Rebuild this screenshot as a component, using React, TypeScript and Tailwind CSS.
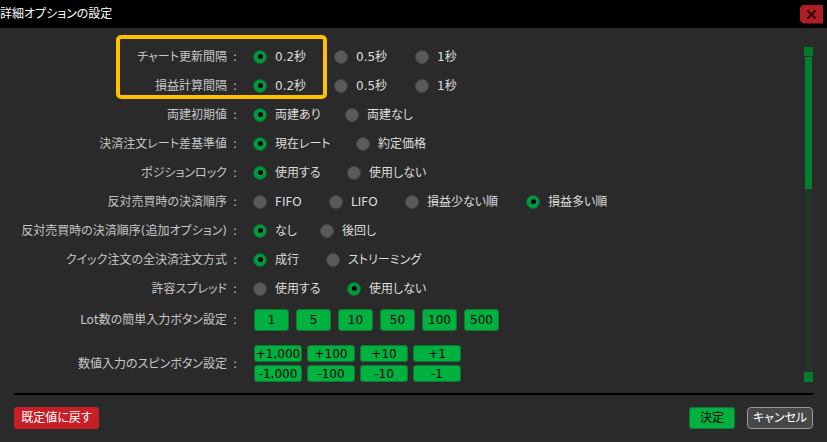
import React from "react"

type Opt = { label: string; w?: string }
type Row = { label: string; selected: number; options: Opt[] }

const rows: Row[] = [
  { label: "チャート更新間隔", selected: 0, options: [{ label: "0.2秒", w: "w-[81px]" }, { label: "0.5秒", w: "w-[81px]" }, { label: "1秒" }] },
  { label: "損益計算間隔", selected: 0, options: [{ label: "0.2秒", w: "w-[81px]" }, { label: "0.5秒", w: "w-[81px]" }, { label: "1秒" }] },
  { label: "両建初期値", selected: 0, options: [{ label: "両建あり", w: "w-[92px]" }, { label: "両建なし" }] },
  { label: "決済注文レート差基準値", selected: 0, options: [{ label: "現在レート", w: "w-[103px]" }, { label: "約定価格" }] },
  { label: "ポジションロック", selected: 0, options: [{ label: "使用する", w: "w-[94px]" }, { label: "使用しない" }] },
  {
    label: "反対売買時の決済順序",
    selected: 3,
    options: [{ label: "FIFO", w: "w-[76px]" }, { label: "LIFO", w: "w-[76px]" }, { label: "損益少ない順", w: "w-[121px]" }, { label: "損益多い順" }],
  },
  { label: "反対売買時の決済順序(追加オプション)", selected: 0, options: [{ label: "なし", w: "w-[67px]" }, { label: "後回し" }] },
  { label: "クイック注文の全決済注文方式", selected: 0, options: [{ label: "成行", w: "w-[73px]" }, { label: "ストリーミング" }] },
  { label: "許容スプレッド", selected: 1, options: [{ label: "使用する", w: "w-[94px]" }, { label: "使用しない" }] },
]

const lots = ["1", "5", "10", "50", "100", "500"]
const spinsUp = ["+1,000", "+100", "+10", "+1"]
const spinsDown = ["-1,000", "-100", "-10", "-1"]

function Radio({ on }: { on: boolean }) {
  return on ? (
    <span className="flex h-[14px] w-[14px] shrink-0 items-center justify-center rounded-full border border-[#0a6a2c] bg-[#00993d]">
      <span className="h-[5px] w-[5px] rounded-full bg-black" />
    </span>
  ) : (
    <span className="h-[14px] w-[14px] shrink-0 rounded-full border border-[#444444] bg-[#5a5a5a]" />
  )
}

function Label({ text }: { text: string }) {
  return (
    <div className="w-[240px] shrink-0 pr-[3px] text-right text-[12px] text-[#c6c6c6]">
      {text}
      <span className="ml-[6px]">:</span>
    </div>
  )
}

function GreenBtn({ text, className }: { text: string; className: string }) {
  return (
    <div className={`flex items-center justify-center rounded-[3px] border border-[#0c7a33] bg-[#00b140] text-[12px] text-black ${className}`}>
      {text}
    </div>
  )
}

export default function App() {
  return (
    <div className="relative flex h-[442px] w-[827px] flex-col overflow-hidden bg-[#2a2a2a] font-['DejaVu_Sans','Noto_Sans_CJK_JP',sans-serif] [font-feature-settings:'palt']">
      {/* Title bar */}
      <div className="flex h-[28px] shrink-0 items-center justify-between bg-black pr-[4px]">
        <span className="text-[12px] text-white">詳細オプションの設定</span>
        <button className="flex h-[19px] w-[23px] items-center justify-center bg-[#b01d25] [clip-path:polygon(3px_0,100%_0,100%_100%,3px_100%,0_calc(100%-3px),0_3px)]">
          <svg width="11" height="11" viewBox="0 0 11 11" fill="none">
            <path d="M1.5 1.5 L9.5 9.5 M9.5 1.5 L1.5 9.5" stroke="#2a0808" strokeWidth="2" />
          </svg>
        </button>
      </div>

      {/* Body */}
      <div className="flex flex-1">
        <div className="flex flex-1 flex-col pt-[14px]">
          {rows.map((row, ri) => (
            <div key={ri} className="flex h-[29px] items-center">
              <Label text={row.label} />
              <div className="ml-[13px] flex items-center">
                {row.options.map((o, oi) => (
                  <div key={oi} className={`flex items-center gap-[8px] ${o.w ?? ""}`}>
                    <Radio on={row.selected === oi} />
                    <span className="whitespace-nowrap text-[12px] text-[#dedede]">{o.label}</span>
                  </div>
                ))}
              </div>
            </div>
          ))}

          {/* Lot buttons */}
          <div className="mt-[6px] flex h-[22px] items-center">
            <Label text="Lot数の簡単入力ボタン設定" />
            <div className="ml-[14px] flex gap-[7px]">
              {lots.map((l) => (
                <GreenBtn key={l} text={l} className="h-[22px] w-[35px]" />
              ))}
            </div>
          </div>

          {/* Spin buttons */}
          <div className="mt-[14px] flex items-center">
            <Label text="数値入力のスピンボタン設定" />
            <div className="ml-[14px] flex flex-col gap-[3px]">
              <div className="flex gap-[5px]">
                {spinsUp.map((s) => (
                  <GreenBtn key={s} text={s} className="h-[17px] w-[48px]" />
                ))}
              </div>
              <div className="flex gap-[5px]">
                {spinsDown.map((s) => (
                  <GreenBtn key={s} text={s} className="h-[17px] w-[48px]" />
                ))}
              </div>
            </div>
          </div>
        </div>

        {/* Scrollbar */}
        <div className="mr-[14px] mt-[19px] flex h-[335px] w-[9px] flex-col items-center">
          <div className="h-[9px] w-[9px] bg-[#007a2d]" />
          <div className="mt-[1px] h-[132px] w-[7px] bg-[#00802e]" />
          <div className="h-[183px] w-[7px] bg-[#233428]" />
          <div className="h-[10px] w-[9px] bg-[#007a2d]" />
        </div>
      </div>

      {/* Divider */}
      <div className="mx-[14px] mb-[12px] border-t-2 border-black" />

      {/* Footer */}
      <div className="mb-[13px] flex items-center px-[14px]">
        <button className="flex h-[22px] w-[85px] items-center justify-center rounded-[3px] bg-[#c81e25] text-[12px] text-white">
          既定値に戻す
        </button>
        <div className="ml-auto flex gap-[12px]">
          <button className="flex h-[22px] w-[46px] items-center justify-center rounded-[3px] border border-[#0c7a33] bg-[#00b140] text-[12px] text-black">
            決定
          </button>
          <button className="flex h-[22px] w-[66px] items-center justify-center rounded-[4px] border border-[#9a9a9a] bg-[#474747] text-[12px] text-white">
            キャンセル
          </button>
        </div>
      </div>

      {/* Highlight annotation */}
      <div className="pointer-events-none absolute left-[116px] top-[35px] h-[64px] w-[211px] rounded-[5px] border-4 border-[#ffc000]" />
    </div>
  )
}
